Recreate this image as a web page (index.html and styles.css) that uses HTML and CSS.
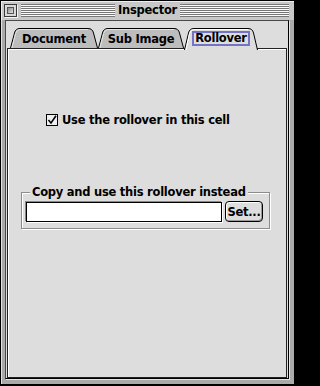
FILE: index.html
```html
<!DOCTYPE html>
<html>
<head>
<meta charset="utf-8">
<link rel="stylesheet" href="styles.css">
</head>
<body>
<div class="window">
  <div class="titlebar">
    <div class="closebox"><div class="closebox-inner"></div></div>
    <div class="stripes stripes-left"></div>
    <div class="title">Inspector</div>
    <div class="stripes stripes-right"></div>
  </div>
  <div class="content">
    <div class="tabs">
      <div class="tab tab-doc">
        <svg class="tab-shape" width="88" height="20"><path d="M0.5 20 L4.5 5 Q5.5 0.5 10 0.5 H78 Q82.5 0.5 83.5 5 L87.5 20" fill="#bdbdbd" stroke="#000"/><path d="M1.9 20 L5.6 5.4 Q6.6 1.5 10 1.5 H78" fill="none" stroke="#e6e6e6"/></svg>
        <span class="tab-label">Document</span>
      </div>
      <div class="tab tab-sub">
        <svg class="tab-shape" width="86" height="20"><path d="M0.5 20 L4.5 5 Q5.5 0.5 10 0.5 H76 Q80.5 0.5 81.5 5 L85.5 20" fill="#bdbdbd" stroke="#000"/><path d="M1.9 20 L5.6 5.4 Q6.6 1.5 10 1.5 H76" fill="none" stroke="#e6e6e6"/></svg>
        <span class="tab-label">Sub Image</span>
      </div>
      <div class="tab tab-roll selected">
        <svg class="tab-shape" width="74" height="22"><path d="M0.5 22 L4.5 5 Q5.5 0.5 10 0.5 H64 Q68.5 0.5 69.5 5 L73.5 22" fill="#dddddd" stroke="#000"/><path d="M1.9 22 L5.6 5.4 Q6.6 1.5 10 1.5 H64" fill="none" stroke="#ffffff"/></svg>
        <span class="tab-label focus">Rollover</span>
      </div>
    </div>
    <div class="pane">
      <label class="check">
        <span class="checkbox"><svg width="10" height="10"><path d="M1.5 5 L4 8 L9 0.8" fill="none" stroke="#000" stroke-width="1.6"/></svg></span>
        <span class="check-label">Use the rollover in this cell</span>
      </label>
      <fieldset class="group">
        <legend class="group-title">Copy and use this rollover instead</legend>
        <div class="row">
          <div class="field"></div>
          <div class="btn">Set...</div>
        </div>
      </fieldset>
    </div>
  </div>
</div>
</body>
</html>
```
FILE: styles.css
```css
html, body {
  margin: 0;
  padding: 0;
  width: 296px;
  height: 386px;
  overflow: hidden;
  background: #000;
}
body {
  font-family: "DejaVu Sans", "Liberation Sans", sans-serif;
  font-weight: bold;
  font-size: 11.5px;
  letter-spacing: -0.25px;
  color: #000;
}
.window {
  box-sizing: border-box;
  width: 296px;
  height: 386px;
  border: 1px solid #000;
  border-right-width: 2px;
  border-bottom-width: 2px;
  background: #aaaaaa;
  box-shadow: inset 1px 1px 0 #e2e2e2;
  display: flex;
  flex-direction: column;
}
.titlebar {
  height: 19px;
  display: flex;
  align-items: center;
  padding: 0 5px 0 3px;
  background: #c8c8c8;
  box-shadow: inset 1px 1px 0 #eeeeee;
}
.closebox {
  box-sizing: border-box;
  width: 13px;
  height: 13px;
  border: 1px solid #3a3a3a;
  background: #d8d8d8;
  padding: 2px;
  margin-right: 4px;
  box-shadow: 1px 1px 0 #f4f4f4;
}
.closebox-inner {
  box-sizing: border-box;
  width: 7px;
  height: 7px;
  border: 1px solid #555;
  background: linear-gradient(135deg, #8a8a8a, #e4e4e4);
}
.stripes {
  height: 13px;
  background: repeating-linear-gradient(to bottom, #777 0 1px, #fafafa 1px 2px);
}
.stripes-left {
  width: 94px;
}
.stripes-right {
  flex: 1;
}
.title {
  width: 65px;
  text-align: center;
  line-height: 19px;
}
.content {
  box-sizing: border-box;
  height: 359px;
  margin: 0 5px 0 4px;
  border: 1px solid #000;
  border-color: #4a4a4a #000 #000 #4a4a4a;
  background: #dddddd;
  box-shadow: 1px 1px 0 #e6e6e6;
  padding: 7px 1px 0 1px;
  display: flex;
  flex-direction: column;
}
.tabs {
  height: 20px;
  display: flex;
  align-items: flex-start;
  padding-left: 3px;
  position: relative;
  z-index: 1;
}
.tab {
  position: relative;
  height: 20px;
  display: flex;
  align-items: center;
  justify-content: center;
}
.tab.selected {
  height: 22px;
}
.tab-doc { width: 88px; }
.tab-sub { width: 86px; }
.tab-roll { width: 74px; }
.tab-shape {
  position: absolute;
  left: 0;
  top: 0;
}
.tab-label {
  position: relative;
  line-height: 14px;
  margin-top: 1px;
}
.selected .tab-label {
  margin-top: -1px;
}
.focus {
  border: 2px solid #7474c6;
  padding: 0 1px;
  line-height: 11px;
  height: 11px;
}
.pane {
  flex: 1;
  border: 1px solid #222;
  background: #dddddd;
  box-shadow: inset 1px 1px 0 #ffffff;
  display: flex;
  flex-direction: column;
  align-items: flex-start;
}
.check {
  display: flex;
  align-items: center;
  height: 14px;
  margin: 64px 0 0 38px;
}
.checkbox {
  box-sizing: border-box;
  width: 12px;
  height: 12px;
  border: 1px solid #000;
  background: #eeeeee;
  display: flex;
  align-items: center;
  justify-content: center;
  margin-right: 4px;
}
.check-label {
  line-height: 14px;
}
.group {
  box-sizing: border-box;
  width: 249px;
  margin: 58px 0 0 13px;
  border: 1px solid #8c8c8c;
  box-shadow: 1px 1px 0 #ffffff, inset 1px 1px 0 #ffffff;
  padding: 2px 5px 6px 4px;
  min-width: 0;
}
.group-title {
  margin-left: 4px;
  padding: 0 2px;
  line-height: 14px;
  background: #dddddd;
}
.row {
  display: flex;
  align-items: center;
  gap: 3px;
}
.field {
  box-sizing: border-box;
  width: 196px;
  height: 20px;
  background: #ffffff;
  border: 1px solid #000;
  box-shadow: -1px -1px 0 #888, 1px 1px 0 #fff;
}
.btn {
  box-sizing: border-box;
  width: 38px;
  height: 21px;
  border: 1px solid #000;
  border-radius: 4px;
  background: #dddddd;
  box-shadow: inset 1px 1px 0 #fff, inset -1px -1px 0 #999;
  display: flex;
  align-items: center;
  justify-content: center;
}
```
